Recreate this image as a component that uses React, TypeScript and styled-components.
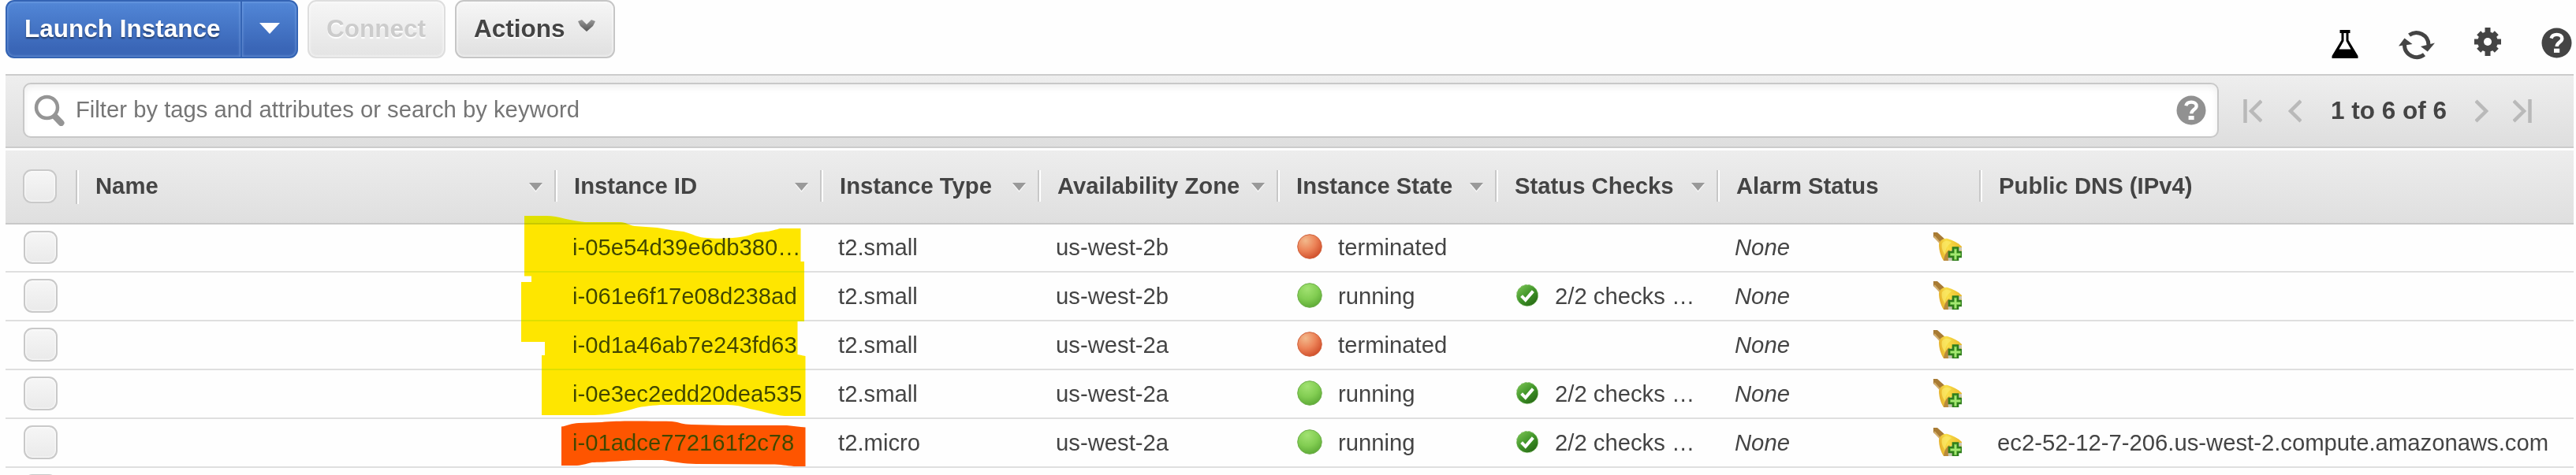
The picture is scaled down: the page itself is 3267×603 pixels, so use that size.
import React from 'react';
import styled, { createGlobalStyle, css } from 'styled-components';

const GlobalStyle = createGlobalStyle`
  * { box-sizing: border-box; }
  html, body { margin: 0; padding: 0; background: #fff; overflow: hidden; }
`;

const Page = styled.div`
  position: relative;
  width: 3267px;
  height: 603px;
  padding: 0 3px 0 7px;
  overflow: hidden;
  background: #fefefe;
  color: #444;
  font: 29.25px/34px 'Liberation Sans', Arial, sans-serif;
  white-space: nowrap;
`;

const Toolbar = styled.header`
  display: flex;
  justify-content: space-between;
  height: 94px;
`;

const ButtonGroup = styled.div`
  display: flex;
  gap: 12px;
`;

const tones = {
  primary: css`
    color: #fff;
    background: linear-gradient(#5287d7, #3a66b7 85%);
    border-color: #3464b4;
    box-shadow: inset 0 0 3px 1px rgba(150, 190, 245, 0.45);
    text-shadow: 0 2px 2px rgba(0, 0, 0, 0.45);
  `,
  plain: css`
    color: #444;
    background: linear-gradient(#f6f6f6, #e0e0e0);
    border-color: #c6c6c6;
    box-shadow: inset 0 0 3px 1px rgba(255, 255, 255, 0.7);
    text-shadow: 0 2px 1px #fff;
  `,
  disabled: css`
    color: #ccc;
    background: linear-gradient(#f6f6f6, #e4e4e4);
    border-color: #dedede;
    box-shadow: inset 0 0 3px 1px rgba(255, 255, 255, 0.7);
    text-shadow: 0 2px 1px #fff;
  `,
};

const Button = styled.button<{ $tone: keyof typeof tones; $width: number; $side?: 'left' | 'right' }>`
  display: flex;
  align-items: center;
  justify-content: ${(p) => (p.$side === 'right' ? 'center' : 'flex-start')};
  width: ${(p) => p.$width}px;
  height: 74px;
  padding: 0 0 2px ${(p) => (p.$side === 'right' ? 0 : 22)}px;
  border: 2px solid;
  border-radius: ${(p) => (p.$side === 'left' ? '11px 0 0 11px' : p.$side === 'right' ? '0 11px 11px 0' : '11px')};
  font: bold 31.5px/36px 'Liberation Sans', Arial, sans-serif;
  ${(p) => tones[p.$tone]}
  ${(p) => p.$side === 'left' && 'border-right-width: 0;'}
`;

const SplitButton = styled.div`
  display: flex;
`;

const ActionCaret = styled.svg`
  margin: -7px 0 0 16px;
`;

const IconTray = styled.div`
  display: flex;
  align-items: flex-start;
  padding: 35px 2px 0 0;
`;

const TrayIcon = styled.svg<{ $drop?: number; $gap?: number }>`
  flex: none;
  margin: ${(p) => p.$drop ?? 0}px ${(p) => p.$gap ?? 0}px 0 0;
`;

const FilterBar = styled.section`
  display: flex;
  align-items: flex-start;
  height: 94px;
  padding: 9px 0 0 22px;
  border: solid #ccc;
  border-width: 2px 0;
  background: linear-gradient(#eee, #dedede);
`;

const SearchBox = styled.div`
  display: flex;
  align-items: center;
  width: 2785px;
  height: 70px;
  padding: 0 14px 0 12px;
  border: 2px solid #c8c8c8;
  border-radius: 10px;
  background: #fff;
  box-shadow: inset 0 4px 8px rgba(0, 0, 0, 0.07);
  color: #757575;
`;

const SearchText = styled.span`
  flex: 1;
  padding: 0 0 2px 13px;
`;

const Pager = styled.nav`
  display: flex;
  align-items: center;
  height: 70px;
  padding-left: 31px;
  font-weight: bold;
  font-size: 31.5px;
`;

const PagerIcon = styled.svg<{ $gap: number }>`
  margin: 2px ${(p) => p.$gap}px 0 0;
`;

const PagerText = styled.span`
  width: 184px;
  padding-left: 1px;
`;

const columnTracks = css`
  display: grid;
  grid-template-columns: 89px 607px 337px 276px 303px 277px 281px 333px 1fr;
`;

const HeaderRow = styled.div`
  ${columnTracks}
  height: 94px;
  margin-top: 3px;
  padding-top: 25px;
  border-bottom: 2px solid #c8c8c8;
  background: linear-gradient(#ededed, #dfdfdf);
`;

const HeaderCell = styled.div<{ $tall?: boolean }>`
  display: flex;
  align-items: center;
  justify-content: space-between;
  height: ${(p) => (p.$tall ? 43 : 40)}px;
  padding: 0 15px ${(p) => (p.$tall ? 4 : 1)}px 21px;
  border-left: 2px solid #c8c8c8;
  box-shadow: inset 2px 0 #fff;
  font-weight: bold;
`;

const HeaderLabel = styled.span`
  padding-left: 2px;
`;

const SortCaret = styled.svg`
  margin-top: 5px;
`;

const CheckCell = styled.div`
  display: flex;
  align-items: flex-start;
`;

const Checkbox = styled.span<{ $left: number; $height?: number; $top?: number }>`
  width: 43px;
  height: ${(p) => p.$height ?? 43}px;
  margin: ${(p) => p.$top ?? 0}px 0 0 ${(p) => p.$left}px;
  border: 2px solid #c9c9c9;
  border-radius: 11px;
  background: linear-gradient(#f6f6f6, #eaeaea);
  box-shadow: inset 0 0 2px 1px rgba(255, 255, 255, 0.8);
`;

const Row = styled.div<{ $first?: boolean }>`
  ${columnTracks}
  height: ${(p) => (p.$first ? 61 : 62)}px;
  padding-bottom: ${(p) => (p.$first ? 1 : 0)}px;
  border-bottom: 2px solid #dfdfdf;
`;

const Cell = styled.div<{ $italic?: boolean }>`
  display: flex;
  align-items: center;
  padding: 0 22px 0 23px;
  font-style: ${(p) => (p.$italic ? 'italic' : 'normal')};
`;

const StateIcon = styled.svg`
  flex: none;
  margin: 0 20px 2px 3px;
`;

const StatusIcon = styled.svg`
  flex: none;
  margin: 0 20px 2px 3px;
`;

const AlarmIcon = styled.svg`
  margin: 0 0 2px auto;
`;

const Marker = styled.svg`
  position: absolute;
  left: 650px;
  top: 270px;
  mix-blend-mode: darken;
  pointer-events: none;
`;

type Instance = { id: string; type: string; zone: string; state: 'running' | 'terminated'; checks?: string; dns?: string };

const instances: Instance[] = [
  { id: 'i-05e54d39e6db380…', type: 't2.small', zone: 'us-west-2b', state: 'terminated' },
  { id: 'i-061e6f17e08d238ad', type: 't2.small', zone: 'us-west-2b', state: 'running', checks: '2/2 checks …' },
  { id: 'i-0d1a46ab7e243fd63', type: 't2.small', zone: 'us-west-2a', state: 'terminated' },
  { id: 'i-0e3ec2edd20dea535', type: 't2.small', zone: 'us-west-2a', state: 'running', checks: '2/2 checks …' },
  {
    id: 'i-01adce772161f2c78',
    type: 't2.micro',
    zone: 'us-west-2a',
    state: 'running',
    checks: '2/2 checks …',
    dns: 'ec2-52-12-7-206.us-west-2.compute.amazonaws.com',
  },
];

const columns: { label: string; sortable?: boolean }[] = [
  { label: 'Name', sortable: true },
  { label: 'Instance ID', sortable: true },
  { label: 'Instance Type', sortable: true },
  { label: 'Availability Zone', sortable: true },
  { label: 'Instance State', sortable: true },
  { label: 'Status Checks', sortable: true },
  { label: 'Alarm Status' },
  { label: 'Public DNS (IPv4)' },
];

const HiddenSvg = styled.svg`
  position: absolute;
`;

const Defs = () => (
  <HiddenSvg width="0" height="0">
    <defs>
      <radialGradient id="terminated" cx="0.33" cy="0.25" r="0.85">
        <stop offset="0" stopColor="#f2b98c" />
        <stop offset="0.5" stopColor="#ec8358" />
        <stop offset="1" stopColor="#cc4724" />
      </radialGradient>
      <radialGradient id="running" cx="0.4" cy="0.22" r="0.9">
        <stop offset="0" stopColor="#a2e272" />
        <stop offset="0.5" stopColor="#82cd52" />
        <stop offset="1" stopColor="#52a02e" />
      </radialGradient>
      <linearGradient id="ok" x1="0.1" y1="0" x2="0.9" y2="1">
        <stop offset="0" stopColor="#7cc455" />
        <stop offset="0.5" stopColor="#3f9428" />
        <stop offset="1" stopColor="#246312" />
      </linearGradient>
      <linearGradient id="bell" x1="0" y1="0.6" x2="1" y2="0.4">
        <stop offset="0" stopColor="#e3ab28" />
        <stop offset="0.4" stopColor="#f9df48" />
        <stop offset="1" stopColor="#eab92c" />
      </linearGradient>
      <linearGradient id="caret" x1="0" y1="0" x2="0" y2="1">
        <stop offset="0" stopColor="#999" />
        <stop offset="1" stopColor="#555" />
      </linearGradient>
    </defs>
  </HiddenSvg>
);

const QuestionShape = ({ color }: { color: string }) => (
  <>
    <circle cx="19.5" cy="19.5" r="19" fill={color} />
    <path d="M12.6 13.6C13.6 10 16.2 8.9 19.6 8.9c4 0 6.7 2 6.7 5.1 0 4.4-6.6 4.6-6.6 9.9" fill="none" stroke="#fff" strokeWidth="4.4" />
    <rect x="16" y="26.7" width="7.2" height="5.2" fill="#fff" />
  </>
);

const StateBall = ({ state }: { state: Instance['state'] }) => (
  <StateIcon width="32" height="32" viewBox="0 0 32 32">
    <circle cx="16" cy="16" r="15.3" fill={`url(#${state})`} stroke={state === 'running' ? '#6fae4c' : '#d0613c'} />
  </StateIcon>
);

const OkBadge = () => (
  <StatusIcon width="30" height="30" viewBox="0 0 30 30">
    <circle cx="15" cy="15" r="13.6" fill="url(#ok)" stroke="#8cc376" strokeDasharray="3 2" />
    <path d="M7.6 15.6l5.1 5.2 9.6-11.2" fill="none" stroke="#fff" strokeWidth="4" />
  </StatusIcon>
);

const AddAlarm = () => (
  <AlarmIcon width="36" height="36" viewBox="0 0 36 36">
    <path d="M0 0h5l10 9-5 6L0 6z" fill="#a87b34" />
    <path d="M1 5l8 9" stroke="#d2ad6a" strokeWidth="2" />
    <path d="M7 15C8 10 13 7 18 8c7 2 13 5 18 10v5L24 36H13C9 30 7 22 7 15z" fill="url(#bell)" />
    <path d="M11 14c3-4 8-4 12-1-5 3-8 8-8 15-4-5-5-9-4-14z" fill="#fbe96a" opacity="0.7" />
    <path d="M13 36c0-5 3-11 7-14l2 4-2 10z" fill="#b98a3c" />
    <path d="M19 36c-1-5 1-11 5-14 4-2 7-3 12-3v3L24 36z" fill="#c9c7b4" />
    <path d="M25 19.5h6V25h5v6h-5v5h-6v-5h-5v-6h5z" fill="#83d452" stroke="#2f7d1c" strokeWidth="2.6" />
    <path d="M28 22v12M22 28h12" stroke="#a4e673" strokeWidth="2" />
  </AlarmIcon>
);

export default function App() {
  return (
    <Page>
      <GlobalStyle />
      <Defs />
      <Toolbar>
        <ButtonGroup>
          <SplitButton>
            <Button $tone="primary" $width={298} $side="left">Launch Instance</Button>
            <Button $tone="primary" $width={73} $side="right">
              <svg width="26" height="14" viewBox="0 0 26 14">
                <path d="M0 0h26L13 14z" fill="#fff" />
              </svg>
            </Button>
          </SplitButton>
          <Button $tone="disabled" $width={175}>Connect</Button>
          <Button $tone="plain" $width={203}>
            Actions
            <ActionCaret width="22" height="15" viewBox="0 0 22 15">
              <path d="M0 2L5 0l6 6 6-6 5 2-3 6-8 7-8-7z" fill="url(#caret)" />
            </ActionCaret>
          </Button>
        </ButtonGroup>
        <IconTray>
          <TrayIcon width="34" height="36" viewBox="0 0 34 36" $drop={3} $gap={51}>
            <path d="M10.5 0h13v4h-2v9L33.500 33v3H.5v-3L12.500 13V4h-2z" fill="#000" />
            <path d="M15.500 4h3v10l6 10.500h-15L15.500 14z" fill="#fff" />
          </TrayIcon>
          <TrayIcon width="46" height="38" viewBox="0 0 46 38" $drop={3} $gap={50}>
            <path d="M13.500 6.500A15.500 15.500 0 0 1 38 19" fill="none" stroke="#444" strokeWidth="5" />
            <path d="M28 21L46 16.500 36.800 27.500z" fill="#444" />
            <path d="M32.500 31.300A15.500 15.500 0 0 1 7.500 19" fill="none" stroke="#444" strokeWidth="5" />
            <path d="M0 20.500L7.500 10.500 17.500 18z" fill="#444" />
          </TrayIcon>
          <TrayIcon width="34" height="36" viewBox="-17 -18 34 36" $gap={51}>
            <circle r="12.8" fill="#444" />
            {[0, 45, 90, 135].map((angle) => (
              <rect key={angle} x="-3.5" y={angle % 90 ? -16 : -18} width="7" height={angle % 90 ? 32 : 36} fill="#444" transform={`rotate(${angle})`} />
            ))}
            <circle r="5" fill="#fff" />
          </TrayIcon>
          <TrayIcon width="39" height="39" viewBox="0 0 39 39">
            <QuestionShape color="#444" />
          </TrayIcon>
        </IconTray>
      </Toolbar>
      <FilterBar>
        <SearchBox>
          <svg width="40" height="40" viewBox="0 0 40 40">
            <path d="M24 25l10.500 11" stroke="#959595" strokeWidth="8" strokeLinecap="round" />
            <circle cx="16.500" cy="16.500" r="13.500" fill="#fff" stroke="#959595" strokeWidth="4.500" />
          </svg>
          <SearchText>Filter by tags and attributes or search by keyword</SearchText>
          <svg width="38" height="38" viewBox="0 0 39 39">
            <QuestionShape color="#919191" />
          </svg>
        </SearchBox>
        <Pager>
          <PagerIcon width="24" height="30" viewBox="0 0 24 30" $gap={33}>
            <path d="M2.500 0v30M23 2L10 15l13 13" fill="none" stroke="#b9b9b9" strokeWidth="4.500" />
          </PagerIcon>
          <PagerIcon width="17" height="30" viewBox="0 0 17 30" $gap={36}>
            <path d="M16 2L3 15l13 13" fill="none" stroke="#b9b9b9" strokeWidth="4.500" />
          </PagerIcon>
          <PagerText>1 to 6 of 6</PagerText>
          <PagerIcon width="17" height="30" viewBox="0 0 17 30" $gap={31}>
            <path d="M1 2l13 13L1 28" fill="none" stroke="#b9b9b9" strokeWidth="4.500" />
          </PagerIcon>
          <PagerIcon width="24" height="30" viewBox="0 0 24 30" $gap={0}>
            <path d="M21.500 0v30M1 2l13 13L1 28" fill="none" stroke="#b9b9b9" strokeWidth="4.500" />
          </PagerIcon>
        </Pager>
      </FilterBar>
      <HeaderRow>
        <CheckCell>
          <Checkbox $left={22} $top={-1} />
        </CheckCell>
        {columns.map((column, index) => (
          <HeaderCell key={column.label} $tall={index === 0}>
            <HeaderLabel>{column.label}</HeaderLabel>
            {column.sortable && (
              <SortCaret width="17" height="12" viewBox="0 0 17 12">
                <path d="M0 2h17L8.500 12z" fill="#f6f6f6" />
                <path d="M0 0h17L8.500 10z" fill="#999" />
              </SortCaret>
            )}
          </HeaderCell>
        ))}
      </HeaderRow>
      {instances.map((instance, index) => (
        <Row key={instance.id} $first={index === 0}>
          <CheckCell>
            <Checkbox $left={23} $top={8} $height={index === 0 ? 42 : 43} />
          </CheckCell>
          <Cell />
          <Cell>{instance.id}</Cell>
          <Cell>{instance.type}</Cell>
          <Cell>{instance.zone}</Cell>
          <Cell>
            <StateBall state={instance.state} />
            {instance.state}
          </Cell>
          <Cell>
            {instance.checks && <OkBadge />}
            {instance.checks}
          </Cell>
          <Cell $italic>
            None
            <AddAlarm />
          </Cell>
          <Cell>{instance.dns}</Cell>
        </Row>
      ))}
      <Row>
        <CheckCell>
          <Checkbox $left={23} $top={8} />
        </CheckCell>
      </Row>
      <Marker width="390" height="325" viewBox="0 0 390 325">
        <path
          d="M15 4H43C58 4 75 11 92 12H137C144 12 147 16 155 17L183 19C196 21 205 23 217 24C228 27 236 32 247 32C262 34 292 32 302 28C310 24 320 25 328 23C334 22 337 20 341 20H365.500V62H370V138H361.500V180L371.500 182V258H345C331 257 318 252 306 250C295 248 287 244 273 244H187C175 245 161 246 150 250C139 253 121 257 104 257H37V181H41V164H11V88H24V80.500H15z"
          fill="#ffe600"
        />
        <path
          d="M62 271.500C69 271 75 267 84 267L113 266C133 264 160 264.500 202 265C213 266 215 269 227 269L270 270H348L371.500 272.500V322H357C347 321 341 319.500 328 319.500L233 319C218 319 204 316 190 314H158C137 315 113 317 101 317C92 319 87 321 79 321H62z"
          fill="#ff5500"
        />
      </Marker>
    </Page>
  );
}
